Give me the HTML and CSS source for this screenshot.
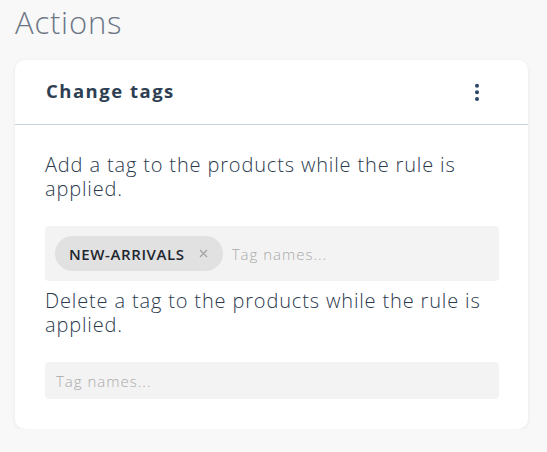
FILE: index.html
```html
<!DOCTYPE html>
<html lang="en">
<head>
<meta charset="utf-8">
<title>Actions</title>
<link rel="stylesheet" href="styles.css">
</head>
<body>
<main class="page">
  <h1 class="page-title">Actions</h1>
  <section class="card">
    <header class="card-header">
      <h2 class="card-title">Change tags</h2>
      <button class="kebab" aria-label="More options">
        <svg width="6" height="19" viewBox="0 0 6 19"><circle cx="3" cy="2.7" r="2"/><circle cx="3" cy="9.3" r="2"/><circle cx="3" cy="16" r="2"/></svg>
      </button>
    </header>
    <div class="card-body">
      <p class="desc">Add a tag to the products while the rule is applied.</p>
      <div class="tag-input">
        <span class="chip">NEW-ARRIVALS
          <svg class="chip-x" width="9" height="9" viewBox="0 0 9 9"><path d="M1 1L8 8M8 1L1 8"/></svg>
        </span>
        <span class="placeholder">Tag names...</span>
      </div>
      <p class="desc desc-2">Delete a tag to the products while the rule is applied.</p>
      <div class="tag-input tag-input-empty">
        <span class="placeholder">Tag names...</span>
      </div>
    </div>
  </section>
</main>
</body>
</html>
```
FILE: styles.css
```css
html, body {
  margin: 0;
  padding: 0;
  background: #f8f8f8;
}
body {
  font-family: "Open Sans", "Noto Sans", sans-serif;
  color: #2b3a4e;
}
.page {
  padding: 2px 19px 0 15px;
}
.page-title {
  margin: 0;
  font-size: 31px;
  font-weight: 300;
  color: #6d7685;
  line-height: 40px;
  letter-spacing: 0.8px;
}
.card {
  margin-top: 18px;
  background: #fff;
  border-radius: 10px;
  box-shadow: 0 1px 4px rgba(0,0,0,0.07);
  width: 513px;
}
.card-header {
  display: flex;
  align-items: center;
  justify-content: space-between;
  height: 64px;
  padding: 0 48px 0 31px;
  border-bottom: 1.5px solid #c3d2e0;
}
.card-title {
  margin: -3px 0 0;
  font-size: 18.5px;
  font-weight: 700;
  color: #2e3f53;
  letter-spacing: 1.5px;
}
.kebab {
  border: 0;
  background: none;
  padding: 0;
  display: flex;
  fill: #2c4667;
}
.card-body {
  padding: 28px 29px 30px 30px;
}
.desc {
  margin: 0;
  font-size: 20px;
  font-weight: 300;
  line-height: 24px;
  letter-spacing: 0.85px;
}
.desc-2 {
  margin-top: 8px;
}
.tag-input {
  margin-top: 25px;
  background: #f3f3f3;
  border-radius: 4px;
  height: 55px;
  display: flex;
  align-items: center;
  padding: 0 10px;
  gap: 9px;
}
.tag-input-empty {
  height: 37px;
  padding: 0 11px;
}
.chip {
  background: #e1e1e1;
  border-radius: 18px;
  height: 35px;
  display: flex;
  align-items: center;
  padding: 0 15px 0 14px;
  font-size: 15px;
  font-weight: 600;
  color: #1f2630;
  letter-spacing: 0.6px;
}
.chip-x {
  margin-left: 14px;
  stroke: #a3a3a3;
  stroke-width: 1.3;
  fill: none;
}
.placeholder {
  font-size: 15px;
  font-weight: 300;
  color: #a9a9a9;
  letter-spacing: 1px;
}
```
